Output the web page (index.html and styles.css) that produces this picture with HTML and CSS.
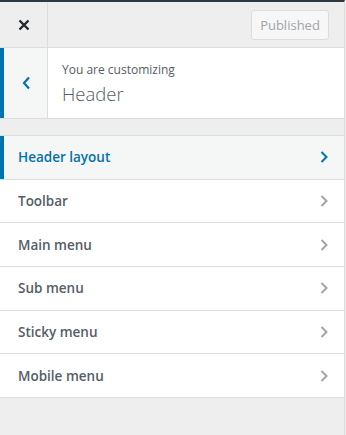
FILE: index.html
```html
<!DOCTYPE html>
<html lang="en">
<head>
    <meta charset="UTF-8">
    <meta name="viewport" content="width=device-width, initial-scale=1.0">
    <title>Customizer - Header</title>
    <link rel="stylesheet" href="styles.css">
</head>
<body>
    <div id="panel">
        <div class="topbar">
            <button class="close-btn" aria-label="Close">
                <svg width="12" height="12" viewBox="0 0 12 12"><path d="M1.5 1.5 L10.5 10.5 M10.5 1.5 L1.5 10.5" stroke="#23282d" stroke-width="2.4" fill="none"/></svg>
            </button>
            <div class="topbar-actions">
                <button class="publish-btn" disabled>Published</button>
            </div>
        </div>

        <div class="section-title">
            <button class="back-btn" aria-label="Back">
                <svg width="9" height="14" viewBox="0 0 9 14"><path d="M7 1.5 L2 7 L7 12.5" stroke="#0073aa" stroke-width="2.2" fill="none"/></svg>
            </button>
            <div class="title-text">
                <span class="customizing">You are customizing</span>
                <h2>Header</h2>
            </div>
        </div>

        <ul class="menu-list">
            <li class="active">Header layout <span class="chevron"><svg width="8" height="12" viewBox="0 0 8 12"><path d="M1.5 1 L6.5 6 L1.5 11" stroke="currentColor" stroke-width="2" fill="none"/></svg></span></li>
            <li>Toolbar <span class="chevron"><svg width="8" height="12" viewBox="0 0 8 12"><path d="M1.5 1 L6.5 6 L1.5 11" stroke="currentColor" stroke-width="2" fill="none"/></svg></span></li>
            <li>Main menu <span class="chevron"><svg width="8" height="12" viewBox="0 0 8 12"><path d="M1.5 1 L6.5 6 L1.5 11" stroke="currentColor" stroke-width="2" fill="none"/></svg></span></li>
            <li>Sub menu <span class="chevron"><svg width="8" height="12" viewBox="0 0 8 12"><path d="M1.5 1 L6.5 6 L1.5 11" stroke="currentColor" stroke-width="2" fill="none"/></svg></span></li>
            <li>Sticky menu <span class="chevron"><svg width="8" height="12" viewBox="0 0 8 12"><path d="M1.5 1 L6.5 6 L1.5 11" stroke="currentColor" stroke-width="2" fill="none"/></svg></span></li>
            <li>Mobile menu <span class="chevron"><svg width="8" height="12" viewBox="0 0 8 12"><path d="M1.5 1 L6.5 6 L1.5 11" stroke="currentColor" stroke-width="2" fill="none"/></svg></span></li>
        </ul>
    </div>
</body>
</html>
```

FILE: styles.css
```css
body {
    margin: 0;
    background-color: #eee;
    font-family: "Open Sans", "Noto Sans", sans-serif;
    color: #555d66;
}
#panel {
    width: 344px;
    height: 433px;
    border-top: 2px solid #32373c;
    border-right: 1px solid #ddd;
    background-color: #eee;
}
.topbar {
    display: flex;
    height: 45px;
    border-bottom: 1px solid #ddd;
}
.close-btn {
    width: 48px;
    border: none;
    border-right: 1px solid #ddd;
    background: transparent;
    padding: 0;
    display: flex;
    align-items: center;
    justify-content: center;
}
.topbar-actions {
    flex: 1;
    display: flex;
    align-items: center;
    justify-content: flex-end;
    padding-right: 15px;
}
.publish-btn {
    height: 30px;
    width: 78px;
    border: 1px solid #ddd;
    border-radius: 3px;
    background-color: #f7f7f7;
    color: #a0a5aa;
    font-family: inherit;
    font-size: 13px;
    padding: 0;
}
.section-title {
    display: flex;
    height: 70px;
    background-color: #fff;
    border-bottom: 1px solid #ddd;
}
.back-btn {
    width: 48px;
    border: none;
    border-left: 4px solid #0073aa;
    border-right: 1px solid #ddd;
    background-color: #f5f6f6;
    padding: 0 0 0 2px;
    display: flex;
    align-items: center;
    justify-content: center;
}
.title-text {
    padding: 13px 0 0 14px;
}
.customizing {
    display: block;
    font-size: 12px;
    line-height: 18px;
    color: #555d66;
}
h2 {
    margin: 2px 0 0;
    font-size: 18.5px;
    font-weight: 300;
    line-height: 26px;
    color: #555d66;
}
.menu-list {
    list-style: none;
    margin: 16px 0 0;
    padding: 0;
    background-color: #fff;
    border-top: 1px solid #ddd;
}
.menu-list li {
    display: flex;
    align-items: center;
    justify-content: space-between;
    height: 42.7px;
    padding: 0 16px 0 18px;
    border-bottom: 1px solid #ddd;
    font-size: 13.5px;
    font-weight: 600;
    color: #555d66;
}
.menu-list li.active {
    background-color: #f5f6f6;
    color: #0073aa;
    box-shadow: inset 4px 0 0 #0073aa;
}
.chevron {
    display: flex;
    color: #a0a5aa;
}
.active .chevron {
    color: #0073aa;
}
```
